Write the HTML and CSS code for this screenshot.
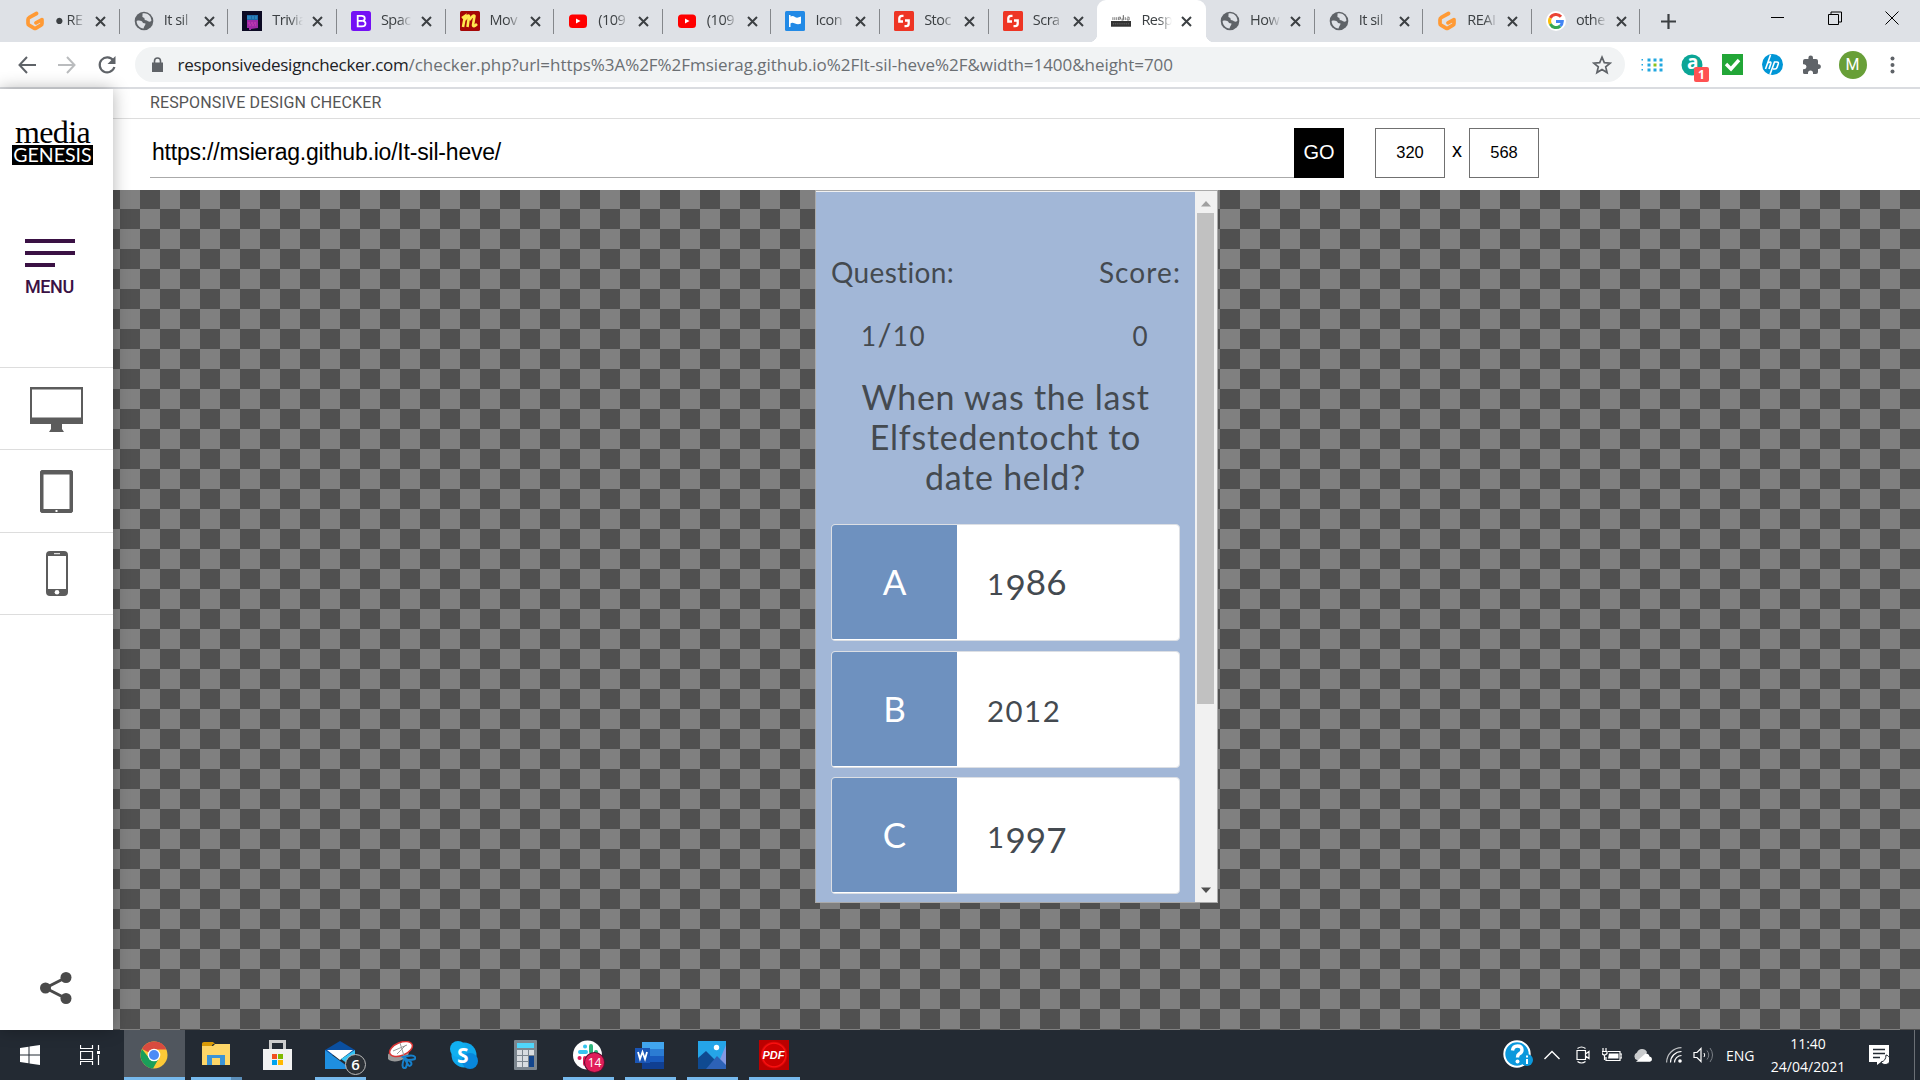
FILE: index.html
```html
<!DOCTYPE html>
<html lang="en">
<head>
<meta charset="utf-8">
<title>Responsive Design Checker</title>
<link rel="stylesheet" href="styles.css">
</head>
<body>
<svg class="defs" aria-hidden="true">
  <symbol id="x" viewBox="0 0 11 11"><path d="M1 1l9 9M10 1l-9 9" stroke="#3c4043" stroke-width="2" fill="none"/></symbol>
  <symbol id="gitpod" viewBox="0 0 20 20"><path d="M11.500 2.500L4.500 6.300Q3 7.200 3 8.500V12.500Q3 13.600 4 14.200L9 17.200Q10 17.800 11 17.200L16 14.200Q17 13.600 17 12.500V8.500L11 11.800" stroke="#ff9a35" stroke-width="3.700" fill="none" stroke-linecap="round" stroke-linejoin="round"/></symbol>
  <symbol id="globe" viewBox="0 0 20 20"><circle cx="10" cy="10" r="9.300" fill="#5f6368"/><path d="M8.500 2.500C11 2 14.500 2.500 16.500 6L17.500 9.500C16 11.500 14 10.500 13 9.500C11 9.500 10 8.500 10.500 7C8.500 6.500 8 5.500 8.500 4.500ZM2.600 10C5 9 8 9.500 9 12L11.500 12.500C11.500 14.500 10 15 9.500 17.500C5.500 17 2.700 14 2.600 10Z" fill="#dee1e6"/></symbol>
  <symbol id="trivia" viewBox="0 0 20 20"><path fill="#0c0a24" d="M0 0h20v20H0z"/><path fill="#1f6aa8" d="M5 4h11v5H5z"/><path fill="#a12aa8" d="M5 9h11v8l-7 1v1H7v-2H5z"/><path d="M6 5v3m2-3v3m3-3v3m3-3v3" stroke="#3d9ccc"/><path d="M6 12h9M7 14h7" stroke="#cf45b4" stroke-dasharray="2 1"/></symbol>
  <symbol id="boot" viewBox="0 0 20 20"><rect width="20" height="20" rx="2.500" fill="#7410f5"/><path d="M6.700 4.800h4c4 0 4 4.700.5 5 4.600.2 4.300 5.600-.3 5.600H6.700zM7 9.800h4" fill="none" stroke="#fff" stroke-width="1.800"/></symbol>
  <symbol id="mm" viewBox="0 0 20 20"><rect width="20" height="20" rx="1.500" fill="#a50707"/><path d="M2 7l3-2-2 11M5 9q3-6 4-4L7.500 16M9.500 9q4-6 5-4L13 14q0 3 4-1" stroke="#ffe84e" stroke-width="2.600" fill="none"/></symbol>
  <symbol id="yt" viewBox="0 0 20 20"><rect x="1" y="3.500" width="18" height="13.500" rx="3.500" fill="red"/><path d="M8 7.500v5l4.500-2.500z" fill="#fff"/></symbol>
  <symbol id="flag" viewBox="0 0 20 20"><rect width="20" height="20" rx="1.500" fill="#228ae6"/><path d="M4 4h1.500v1.500Q8 4.500 10 6t6-.5v7q-3 1.500-6 0t-4.500 0V16H4z" fill="#fff"/></symbol>
  <symbol id="shutter" viewBox="0 0 20 20"><rect width="20" height="20" rx="1.500" fill="#ee3524"/><path d="M9.500 4.800H8Q5.300 4.800 5.300 7.500V10.500H9M10.500 15.200H12Q14.700 15.200 14.700 12.500V9.500H11" fill="none" stroke="#fff" stroke-width="2.300"/></symbol>
  <symbol id="mg" viewBox="0 0 21 12"><path d="M0 6h21v6H0z" fill="#333"/><path d="M2 5V2m2 3V2m2 3V2m2 2h2V2H8v3m3-1h2V0v5h-2m4-3v3m2-3h2v3h-2V3" stroke="#777" fill="none"/><path d="M2 9h17" stroke="#777" stroke-dasharray="1 1"/></symbol>
  <symbol id="google" viewBox="0 0 20 20"><circle cx="10" cy="10" r="10" fill="#fff"/><g fill="none" stroke-width="3"><path d="M15 5.800A6.500 6.500 0 0 0 4.300 7" stroke="#ea4335"/><path d="M4.300 7a6.500 6.500 0 0 0 0 6" stroke="#fbbc05"/><path d="M4.300 13a6.500 6.500 0 0 0 10 2" stroke="#34a853"/><path d="M14.300 15a6.500 6.500 0 0 0 2-4.500H10" stroke="#4285f4"/></g></symbol>
</svg>

<header class="tabs">
  <div class="tab"><svg class="fav"><use href="#gitpod"/></svg><span class="tt">● RE</span><svg class="cl"><use href="#x"/></svg></div>
  <div class="tab"><svg class="fav"><use href="#globe"/></svg><span class="tt">It sil</span><svg class="cl"><use href="#x"/></svg></div>
  <div class="tab"><svg class="fav"><use href="#trivia"/></svg><span class="tt">Trivia</span><svg class="cl"><use href="#x"/></svg></div>
  <div class="tab"><svg class="fav"><use href="#boot"/></svg><span class="tt">Spac</span><svg class="cl"><use href="#x"/></svg></div>
  <div class="tab"><svg class="fav"><use href="#mm"/></svg><span class="tt">Mov</span><svg class="cl"><use href="#x"/></svg></div>
  <div class="tab"><svg class="fav"><use href="#yt"/></svg><span class="tt">(109</span><svg class="cl"><use href="#x"/></svg></div>
  <div class="tab"><svg class="fav"><use href="#yt"/></svg><span class="tt">(109</span><svg class="cl"><use href="#x"/></svg></div>
  <div class="tab"><svg class="fav"><use href="#flag"/></svg><span class="tt">Icon</span><svg class="cl"><use href="#x"/></svg></div>
  <div class="tab"><svg class="fav"><use href="#shutter"/></svg><span class="tt">Stoc</span><svg class="cl"><use href="#x"/></svg></div>
  <div class="tab nosep"><svg class="fav"><use href="#shutter"/></svg><span class="tt">Scra</span><svg class="cl"><use href="#x"/></svg></div>
  <div class="tab active nosep"><svg class="fav"><use href="#mg"/></svg><span class="tt">Resp</span><svg class="cl"><use href="#x"/></svg></div>
  <div class="tab"><svg class="fav"><use href="#globe"/></svg><span class="tt">How</span><svg class="cl"><use href="#x"/></svg></div>
  <div class="tab"><svg class="fav"><use href="#globe"/></svg><span class="tt">It sil</span><svg class="cl"><use href="#x"/></svg></div>
  <div class="tab"><svg class="fav"><use href="#gitpod"/></svg><span class="tt">REAI</span><svg class="cl"><use href="#x"/></svg></div>
  <div class="tab last"><svg class="fav"><use href="#google"/></svg><span class="tt">othe</span><svg class="cl"><use href="#x"/></svg></div>
  <svg class="plus" viewBox="0 0 15 15"><path d="M7.500 0v15M0 7.500h15" stroke="#3c4043" stroke-width="2.200"/></svg>
  <div class="wincontrols">
    <svg viewBox="0 0 14 14"><path d="M0 6.500h13" stroke="#000"/></svg>
    <svg viewBox="0 0 14 14"><path d="M.5 3.500h10v10H.5zM3 3V1h10.500v10H11" fill="none" stroke="#000"/></svg>
    <svg viewBox="0 0 14 14"><path d="M.5.500l13 13M13.500.500l-13 13" stroke="#000"/></svg>
  </div>
</header>

<div class="toolbar">
  <svg class="nav" viewBox="0 0 20 20"><path d="M19 10H3M10 2L2.500 10 10 18" fill="none" stroke="#5f6368" stroke-width="2"/></svg>
  <svg class="nav" viewBox="0 0 20 20"><path d="M1 10h16M10 2l7.500 8L10 18" fill="none" stroke="#babcbe" stroke-width="2"/></svg>
  <svg class="nav" viewBox="0 0 20 20"><path d="M16.300 5.500A7.500 7.500 0 1 0 17.400 12" fill="none" stroke="#5f6368" stroke-width="2.200"/><path d="M18.500 1v8h-8z" fill="#5f6368"/></svg>
  <div class="omnibox">
    <svg class="lock" viewBox="0 0 11 15"><path d="M0 5.500h11V15H0z" fill="#5f6368"/><path d="M2.500 6V4a3 3 0 0 1 6 0v2" fill="none" stroke="#5f6368" stroke-width="1.600"/></svg>
    <span class="addr"><b>responsivedesignchecker.com</b>/checker.php?url=https%3A%2F%2Fmsierag.github.io%2FIt-sil-heve%2F&amp;width=1400&amp;height=700</span>
    <svg class="star" viewBox="0 0 20 20"><path d="M10 2.200l2.300 5.400 5.900.5-4.500 3.800 1.400 5.700-5.100-3.100-5.100 3.100 1.400-5.700L1.800 8.100l5.900-.5z" fill="none" stroke="#5f6368" stroke-width="1.700"/></svg>
  </div>
  <div class="exts">
    <svg width="22" height="14" viewBox="0 0 22 14"><g fill="#22a7e0"><path d="M.5 1h1.500v1.500H.5zm0 5h1.500v1.500H.5zm0 5h1.500v1.500H.5zM6.500.500h3v3h-3zm0 5h3v3h-3zm0 5h3v3h-3zM12.500.500h3v3h-3zm0 10h3v3h-3zM18.500.500h3v3h-3zm0 5h3v3h-3zm0 5h3v3h-3z"/></g><path d="M12.500 5.500h3v3h-3z" fill="#8cc21c"/></svg>
    <div class="alexa"><svg width="22" height="22" viewBox="0 0 22 22"><circle cx="11" cy="11" r="10.500" fill="#0ba596"/></svg><b>a</b><i>1</i></div>
    <svg width="21" height="21" viewBox="0 0 21 21"><path fill="#22a637" d="M0 0h21v21H0z"/><path d="M4 10l5 5 8-9" fill="none" stroke="#fff" stroke-width="3.400"/></svg>
    <svg width="21" height="21" viewBox="0 0 21 21"><circle cx="10.500" cy="10.500" r="10.500" fill="#0096d6"/><path d="M8.500 1L3.500 15M5.500 9Q9.500 7 8.800 9.500L7 15M8 20.500L12.500 8h2.500q1.800 0 1.200 2L15 13.500Q14.500 15 13 15H11" fill="none" stroke="#fff" stroke-width="1.600"/></svg>
    <svg width="20" height="20" viewBox="0 0 20 20"><path fill="#5f6368" d="M17 9.300h-1V6q0-2-2-2h-3V2.800a2.300 2.300 0 0 0-4.600 0V4H3Q1 4 1 6v3.200h1a2.500 2.500 0 0 1 0 5H1v3.300q0 1.500 1.500 1.500H6v-1a2.500 2.500 0 0 1 5 0v1h3q2 0 2-2v-3h1a2.400 2.400 0 0 0 0-4.700z"/></svg>
    <span class="avatar">M</span>
    <svg width="5" height="18" viewBox="0 0 5 18"><g fill="#5f6368"><circle cx="2.500" cy="2.500" r="2"/><circle cx="2.500" cy="9" r="2"/><circle cx="2.500" cy="15.500" r="2"/></g></svg>
  </div>
</div>

<div class="page">
  <aside class="side">
    <div class="logo"><span class="l1">media</span><span class="l2">GENESIS</span></div>
    <div class="menu"><i></i><i></i><i class="short"></i><span class="mt">MENU</span></div>
    <div class="dev"><svg width="53" height="45" viewBox="0 0 53 45"><path fill="#5c5c5c" fill-rule="evenodd" d="M0 0h53v37H32v5l2 3H19l2-3v-5H0zM2 2.500v28h49v-28z"/></svg></div>
    <div class="dev"><svg width="33" height="43" viewBox="0 0 33 43"><path fill="#5c5c5c" fill-rule="evenodd" d="M1.500 0h30L33 1.500v40L31.500 43h-30L0 41.500v-40zM3.500 4.500V39h26V4.500zM15.500 40v2h2v-2z"/></svg></div>
    <div class="dev"><svg width="22" height="45" viewBox="0 0 22 45"><path fill="#5c5c5c" fill-rule="evenodd" d="M4 0h14q4 0 4 4v37q0 4-4 4H4q-4 0-4-4V4Q0 0 4 0zM2 5v33h18V5z"/><path d="M8 2.700h6" stroke="#fff"/><circle cx="11" cy="41.200" r="2.300" fill="#fff"/></svg></div>
    <svg class="share" viewBox="0 0 32 32"><g fill="#4a4a4a"><circle cx="5.500" cy="16" r="5.500"/><circle cx="26" cy="5.500" r="5.500"/><circle cx="26" cy="26.500" r="5.500"/></g><path d="M26 5.500L5.500 16 26 26.500" fill="none" stroke="#4a4a4a" stroke-width="3"/></svg>
  </aside>
  <main class="main">
    <div class="title">RESPONSIVE DESIGN CHECKER</div>
    <div class="form">
      <div class="urlin">https://msierag.github.io/It-sil-heve/</div><div class="go">GO</div>
      <div class="num">320</div><span class="by">x</span><div class="num">568</div>
    </div>
    <div class="stage">
      <div class="frame">
        <div class="quiz">
          <div class="row labels"><span class="question">Question:</span><span class="score">Score:</span></div>
          <div class="row vals"><span><small>1</small>/<small>10</small></span><span><small>0</small></span></div>
          <h1>When was the last<br>Elfstedentocht to<br>date held?</h1>
          <div class="card"><div class="let">A</div><div class="ans"><small>1</small><sub>9</sub>86</div></div>
          <div class="card"><div class="let">B</div><div class="ans"><small>2012</small></div></div>
          <div class="card"><div class="let">C</div><div class="ans"><small>1</small><sub>997</sub></div></div>
        </div>
        <div class="scroll">
          <svg width="10" height="6" viewBox="0 0 10 6"><path d="M0 5.500L5 0l5 5.500z" fill="#a0a0a0"/></svg>
          <div class="track"><div class="thumb"></div></div>
          <svg width="10" height="6" viewBox="0 0 10 6"><path d="M0 .5L5 6l5-5.500z" fill="#505050"/></svg>
        </div>
      </div>
    </div>
  </main>
</div>

<footer class="taskbar">
  <div class="sys"><svg width="20" height="20" viewBox="0 0 20 20"><path fill="#fff" d="M0 3l8.500-1.200v7.700H0zM9.500 1.600L20 0v9.500H9.500zM0 10.500h8.500v7.700L0 17zM9.500 10.500H20V20L9.500 18.400z"/></svg></div>
  <div class="sys"><svg width="20" height="20" viewBox="0 0 20 20"><path d="M.5 0v3.500h12V0M.5 6.500h12v8H.5zM.5 20v-3.500h12V20M18.500 0v5M18.500 10v10" fill="none" stroke="#fff" stroke-width="1.200"/><path d="M17 6h3v3h-3z" fill="#fff"/></svg></div>
  <div class="apps">
    <div class="app on cur"><svg width="28" height="28" viewBox="0 0 28 28"><circle cx="14" cy="14" r="13.500" fill="#fdc937"/><path d="M14 14L2 8A13.500 13.500 0 0 1 26.500 8.500H14z" fill="#d94b3f"/><path d="M2 8a13.500 13.500 0 0 0 11 19.500L19 17l-10 0z" fill="#1a9f5a"/><circle cx="14" cy="14" r="6.300" fill="#fff"/><circle cx="14" cy="14" r="5" fill="#4c8bf5"/></svg></div>
    <div class="app on multi"><svg width="28" height="26" viewBox="0 0 28 26"><path fill="#d99a06" d="M0 1.500Q0 0 2 0h9l2 2h-2l-2 3H0z"/><path fill="#fed668" d="M0 4h11l2-2h15v21H0z"/><path fill="#3b93d6" d="M5 13h18v10h-5v-7h-8v7H5z"/></svg></div>
    <div class="app"><svg width="29" height="30" viewBox="0 0 29 30"><path d="M7.500 10V1.500h14V10" fill="none" stroke="#ccc" stroke-width="3"/><path fill="#f2f2f2" d="M0 9h29v21H0z"/><path fill="#f25022" d="M9 14h5v5H9z"/><path fill="#7fba00" d="M15 14h5v5h-5z"/><path fill="#00a4ef" d="M9 20h5v5H9z"/><path fill="#ffb900" d="M15 20h5v5h-5z"/></svg></div>
    <div class="app on"><svg width="30" height="28" viewBox="0 0 30 28"><path fill="#0a4fa0" d="M0 9L15 0l15 9v5H0z"/><path fill="#fff" d="M2 9h26L15 19z"/><path fill="#1f8fe0" d="M0 9l22 16 8 3H0z"/><path fill="#35c4f5" d="M30 9v19L16 18z"/></svg><span class="badge mailb">6</span></div>
    <div class="app"><svg width="28" height="28" viewBox="0 0 28 28"><ellipse cx="10" cy="14" rx="11" ry="6" transform="rotate(-15 10 14)" fill="#999"/><ellipse cx="13" cy="8" rx="12" ry="6.500" transform="rotate(-22 13 8)" fill="#fff" stroke="#d93434" stroke-width="1.500"/><path d="M5 10l14-6M12 2l5 16M9 13l9-9" stroke="#999"/><path d="M15 16q10-3 12 0t-7 3zM16 18q-3 8 0 9t3-7zM18 18q7 3 5 6t-5-4z" fill="none" stroke="#1680cc" stroke-width="2"/></svg></div>
    <div class="app"><svg width="28" height="28" viewBox="0 0 28 28"><circle cx="14" cy="14" r="12.500" fill="#0fa7ec"/><circle cx="8" cy="8" r="8" fill="#11b0f0"/><circle cx="20" cy="20" r="8" fill="#0887dc"/></svg><span class="skype">S</span></div>
    <div class="app"><svg width="23" height="30" viewBox="0 0 23 30"><rect width="23" height="30" rx="1" fill="#7c868f"/><path fill="#50d5fa" d="M3 3h17v5H3z"/><path fill="#d9dde1" d="M3 10h5v5H3zm6 0h5v5H9zm6 0h5v5h-5zM3 16h5v5H3zm6 0h5v5H9zM3 22h5v5H3zm6 0h5v5H9z"/><path fill="#12458d" d="M15 16h5v11h-5z"/></svg></div>
    <div class="app on"><svg width="29" height="30" viewBox="0 0 29 30"><circle cx="14.500" cy="15" r="14.500" fill="#fff"/><g fill="none" stroke-width="4" stroke-linecap="round"><path d="M12 6.500h.1M7 12h6" stroke="#36c5f0"/><path d="M18 6v6M23 12h.1" stroke="#2eb67d"/><path d="M12 18v6M6.500 18h.1" stroke="#e01e5a"/></g></svg><span class="badge slackb">14</span></div>
    <div class="app on"><svg width="29" height="27" viewBox="0 0 29 27"><path fill="#41a5ee" d="M7 0h22v7H7z"/><path fill="#2b7cd3" d="M7 7h22v7H7z"/><path fill="#185abd" d="M7 14h22v6H7z"/><path fill="#103f91" d="M7 20h22v7H7z"/><path fill="#1a55b5" d="M0 6h15v15H0z"/><path d="M3 10l2 7 2.500-7L10 17l2-7" fill="none" stroke="#fff" stroke-width="1.800"/></svg></div>
    <div class="app on"><svg width="28" height="28" viewBox="0 0 28 28"><path fill="#25a5e8" d="M0 0h28v28H0z"/><path fill="#8398e2" d="M28 4v24H18z"/><path fill="#0f4a91" d="M0 17l8-7 18 18H0z"/><path fill="#2d62b6" d="M8 28l11-13 9 9v4z"/><circle cx="18.500" cy="6.500" r="2.700" fill="#fff"/></svg></div>
    <div class="app on"><span class="pdf">PDF</span></div>
  </div>
  <div class="tray">
    <svg class="help" viewBox="0 0 30 30"><circle cx="14" cy="14" r="12.700" fill="#0b98dc" stroke="#fff" stroke-width="2"/><path d="M9.500 10.500q.5-4.500 5-4.500t4.500 4q0 2.500-3 4-1.500 1-1.500 3.500" fill="none" stroke="#fff" stroke-width="3.400"/><circle cx="14.500" cy="21.500" r="2" fill="#fff"/><circle cx="24" cy="20" r="6" fill="#0b98dc"/><path d="M24 19v5M24 15.500v2" stroke="#fff" stroke-width="2"/></svg>
    <svg class="chev" viewBox="0 0 16 10"><path d="M.5 9L8 1.500 15.500 9" fill="none" stroke="#fff" stroke-width="1.400"/></svg>
    <svg class="meet" viewBox="0 0 14 18"><path d="M1 4.500h8.500v9H1zM9.500 8l3.500-2.500v7L9.500 10M1.500 2.500q4-3 8 0M1.500 15.500q4 3 8 0" fill="none" stroke="#fff" stroke-width="1.200"/></svg>
    <svg class="bat" viewBox="0 0 20 14"><path d="M6 3.500h12v9H4V9M18.500 6H20v4h-1.500M1 0v3M4 0v3M0 3.500h5v2q-2.500 3-5 0zM2.500 7v5" fill="none" stroke="#fff" stroke-width="1.200"/><path fill="#fff" d="M7 5.500h9.500v5H6z"/></svg>
    <svg class="cloud" viewBox="0 0 20 13"><path fill="#c9cbcd" d="M4 11a4 4 0 0 1 0-7.500 5.500 5.500 0 0 1 10-.5l-3 8z"/><path fill="#fff" d="M3 12.800L12.500 4.500q3.500 0 4 3a2.700 2.700 0 0 1 .500 5.300z"/></svg>
    <svg class="wifi" viewBox="0 0 16 16"><g fill="none" stroke="#fff" stroke-width="1.200"><path d="M.6 15.500A15 15 0 0 1 15.500.6" opacity=".7"/><path d="M4.500 15.500a11 11 0 0 1 11-11M8.500 15.500a7 7 0 0 1 7-7"/></g><circle cx="14" cy="14" r="1.800" fill="#fff"/></svg>
    <svg class="vol" viewBox="0 0 20 16"><path d="M1 5.500h3l4-4v13l-4-4H1z" fill="none" stroke="#fff" stroke-width="1.200"/><path d="M11 6q1.500 2 0 4" stroke="#fff" fill="none"/><path d="M14 3.500q3.500 4.500 0 9M17 1q5 7 0 14" stroke="#7b8087" fill="none"/></svg>
    <span class="eng">ENG</span>
    <div class="clock"><span>11:40</span><span>24/04/2021</span></div>
    <svg class="note" viewBox="0 0 20 20"><path fill="#fff" d="M0 0h20v17h-8l-4 3v-3H0z"/><path d="M4 4.500h12M4 8.500h12M4 12.500h7" stroke="#232a33" stroke-width="1.300"/><path d="M17 10a4.800 4.800 0 1 1-5 7q5-1 5-7z" fill="#fff" stroke="#232a33"/></svg>
  </div>
</footer>
</body>
</html>
```
FILE: styles.css
```css
* { box-sizing: border-box; }
body { margin: 0; width: 1920px; height: 1080px; overflow: hidden; display: flex; flex-direction: column; font-family: "Open Sans", sans-serif; }
.defs { display: none; }
svg { flex: none; display: block; }

.tabs { height: 42px; background: #dee1e6; display: flex; align-items: center; padding-left: 11px; }
.tab { width: 108.650px; height: 42px; display: flex; align-items: center; padding-left: 14px; position: relative; flex: none; }
.tab::after { content: ""; position: absolute; right: 0; top: 9px; width: 1px; height: 25px; background: #84878b; }
.tab.nosep::after { display: none; }
.tab.last { width: 107px; }
.tab.last::after { right: -9px; right: -1px; }
.active { background: #fff; border-radius: 9px 9px 0 0; }
.active::before { content: ""; position: absolute; bottom: 0; left: -8px; right: -8px; height: 8px; background: radial-gradient(circle at 0 0, transparent 8px, #fff 8.500px) left / 8px 8px no-repeat, radial-gradient(circle at 100% 0, transparent 8px, #fff 8.500px) right / 8px 8px no-repeat; }
.fav { width: 20px; height: 20px; }
.tt { width: 31px; margin-left: 10px; font-size: 14.500px; letter-spacing: -.5px; line-height: 20px; margin-top: -2px; white-space: nowrap; overflow: hidden; color: #3c4043; -webkit-mask-image: linear-gradient(90deg, #000 55%, transparent); mask-image: linear-gradient(90deg, #000 55%, transparent); }
.cl { width: 11px; height: 11px; margin-left: 9px; }
.plus { width: 15px; height: 15px; margin-left: 22px; }
.wincontrols { display: flex; gap: 43px; margin: 0 21px 6px auto; }
.wincontrols svg { width: 14px; height: 14px; }

.toolbar { height: 47px; border-bottom: 2px solid #dadce0; background: #fff; display: flex; align-items: center; padding-left: 17px; }
.nav { width: 20px; height: 20px; margin-right: 20px; }
.omnibox { width: 1490px; height: 35px; margin-left: -2px; border-radius: 18px; background: #f1f3f4; display: flex; align-items: center; padding: 0 13px 0 17px; }
.lock { width: 11px; height: 15px; }
.addr { margin-left: 14.500px; font-size: 17px; letter-spacing: -.05px; color: #6b6f73; white-space: nowrap; }
.addr b { font-weight: 400; letter-spacing: -.27px; color: #202124; }
.star { width: 20px; height: 20px; margin-left: auto; }
.exts { display: grid; grid-template-columns: repeat(7, 40px); margin-left: 7px; place-items: center; }
.alexa { position: relative; color: #fff; }
.alexa b { position: absolute; left: 6px; top: -5px; font-size: 19px; }
.alexa i { position: absolute; left: 13px; top: 13px; width: 15px; height: 15px; background: #ff5252; border-radius: 2px; font: 700 12px/15px "Open Sans", sans-serif; text-align: center; }
.avatar { width: 28px; height: 28px; border-radius: 50%; background: #689f38; color: #fff; font: 16px/28px Roboto, sans-serif; text-align: center; margin-left: 1px; }

.page { height: 941px; display: flex; }
.side { width: 113px; background: #fff; display: flex; flex-direction: column; box-shadow: 0 0 16px rgba(0, 0, 0, .3); z-index: 1; padding-top: 24px; }
.logo { width: 81px; height: 52px; margin-left: 12px; display: flex; flex-direction: column; }
.l1 { height: 32px; font: 32px/38px "Liberation Serif", serif; letter-spacing: -.6px; text-align: center; }
.l2 { height: 20px; background: #000; color: #fff; font: 19.500px/20px Lato, sans-serif; text-align: center; white-space: nowrap; }
.menu { margin: 74px 0 0 25px; height: 128px; display: flex; flex-direction: column; }
.menu i { width: 50px; height: 4px; background: #3a1144; margin-bottom: 8px; }
.menu .short { width: 30px; }
.mt { font: 500 18px/24px Roboto, sans-serif; letter-spacing: -.4px; color: #3a1144; }
.dev { height: 82.300px; border-top: 1px solid #ddd; display: flex; align-items: center; justify-content: center; padding-top: 2px; }
.dev:nth-of-type(5) { height: 83.300px; border-bottom: 1px solid #ddd; padding-top: 1px; }
.share { width: 32px; height: 32px; margin: auto 0 26px 40px; }
.main { flex: 1; display: flex; flex-direction: column; }
.title { height: 30px; border-bottom: 1px solid #ddd; padding-left: 37px; font: 16px/28px Roboto, sans-serif; letter-spacing: .13px; color: #555; }
.form { height: 71px; padding: 9px 0 0 37px; display: flex; font-family: "Liberation Sans", sans-serif; }
.urlin { width: 1144px; height: 50px; border-bottom: 1px solid #aaa; font-size: 23px; letter-spacing: -.2px; line-height: 48px; padding-left: 2px; }
.go { width: 50px; height: 50px; background: #000; color: #fff; font-size: 20px; line-height: 48px; text-align: center; margin-right: 31px; }
.num { width: 70px; height: 50px; border: 1px solid #707070; font-size: 16.500px; line-height: 47px; text-align: center; }
.by { width: 24px; text-align: center; font-size: 20px; line-height: 44px; }
.stage { flex: 1; background: repeating-conic-gradient(#505050 0 25%, #808080 0 50%) 7px -1px / 40px 40px; padding-left: 702px; }

.frame { width: 403px; height: 713px; border: 1px solid #aaa; display: flex; background: #f1f1f1; }
.quiz { width: 379px; margin-top: 1px; background: #a2b7d7; padding: 63px 15px 0; font-family: Lato, sans-serif; color: #444a50; display: flex; flex-direction: column; overflow: hidden; }
.row { display: flex; justify-content: space-between; line-height: 34px; white-space: nowrap; }
.labels { font-size: 28px; }
.question { letter-spacing: .35px; }
.score { letter-spacing: 1.100px; margin-right: -1px; }
.vals { padding: 28px 31px 0 30px; font-size: 31px; letter-spacing: 1.200px; }
h1 { margin: 26px 0 27px; font-size: 34px; line-height: 40px; font-weight: 400; letter-spacing: .75px; text-align: center; white-space: nowrap; }
small { font-size: .84em; line-height: 0; letter-spacing: 1.500px; }
sub { font-size: 1em; vertical-align: -.15em; line-height: 0; }
.card { height: 117px; margin-bottom: 9.500px; border: 1px solid #dcdfe4; border-radius: 4px; background: #fff; display: flex; overflow: hidden; flex: none; }
.let { width: 125px; height: 114px; background: #6e91bf; color: #fff; font-size: 35px; line-height: 113px; text-align: center; }
.ans { padding-left: 30px; font-size: 35px; line-height: 112px; }
.scroll { width: 22px; padding: 10px 3px 9px 2px; display: flex; flex-direction: column; align-items: center; }
.track { flex: 1; width: 17px; padding-top: 6px; }
.thumb { height: 491px; background: #c1c1c1; }

.taskbar { height: 50px; background: #232a33; color: #fff; display: flex; }
.sys { width: 60px; display: grid; place-items: center; }
.apps { display: flex; gap: 11px; margin-left: 9px; }
.app { width: 51px; display: grid; place-items: center; position: relative; padding-right: 2px; }
.on::after { content: ""; position: absolute; left: 0; bottom: 0; width: 51px; height: 3px; background: #76b9ed; }
.cur { width: 61px; margin: 0 -5px; background: #50565e; }
.cur::after { width: 61px; }
.multi::after { background: linear-gradient(90deg, #76b9ed 40px, #5a8db8 40px); }
.badge { position: absolute; border-radius: 50%; text-align: center; }
.mailb { left: 30px; top: 24px; width: 21px; height: 21px; background: #2b3036; border: 1px solid #bbb; font: 600 15px/19px "Open Sans", sans-serif; }
.slackb { left: 22px; top: 23px; width: 19px; height: 19px; background: #e01e5a; box-shadow: 0 0 0 1px #5b1030; font: 12px/19px "Open Sans", sans-serif; }
.skype { position: absolute; left: 18px; font-size: 21px; font-weight: 700; line-height: 30px; }
.pdf { width: 30px; height: 30px; background: radial-gradient(ellipse at center, #c00 50%, #f11 55%, #b00 65%); font: italic 700 11px/30px "Liberation Sans", sans-serif; text-align: center; }
.tray { margin-left: auto; display: flex; align-items: center; padding-right: 5px; }
.help { width: 30px; height: 30px; margin-right: 11px; }
.chev { width: 16px; height: 10px; margin-right: 16px; }
.meet { width: 14px; height: 18px; margin-right: 12px; }
.bat { width: 20px; height: 14px; margin-right: 11px; }
.cloud { width: 20px; height: 13px; margin-right: 13px; }
.wifi { width: 16px; height: 16px; margin-right: 11px; }
.vol { width: 20px; height: 16px; margin-right: 13px; }
.eng { width: 30px; font-size: 14px; white-space: nowrap; }
.clock { width: 104px; display: flex; flex-direction: column; align-items: center; font-size: 14px; line-height: 23px; }
.note { width: 20px; height: 20px; margin: 0 25px 0 9px; }
.tray::after { content: ""; width: 1px; height: 50px; background: #6b7076; }
```
